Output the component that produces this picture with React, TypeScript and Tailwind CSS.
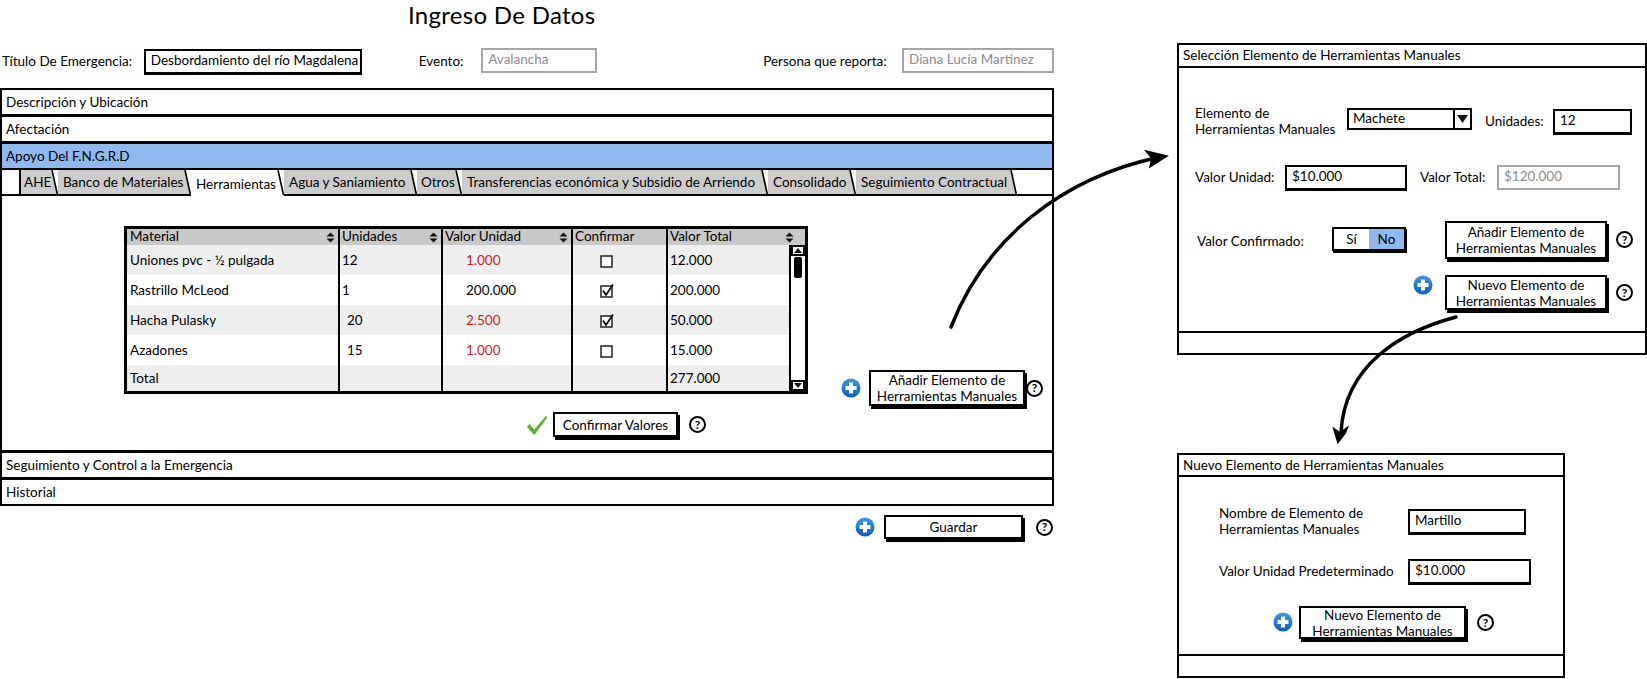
import React from "react";

function PlusIcon({ className = "" }: { className?: string }) {
  return (
    <svg width="20" height="21" viewBox="0 0 20 21" className={`shrink-0 ${className}`}>
      <defs>
        <linearGradient id="plusBlue" x1="0" y1="0" x2="0" y2="1">
          <stop offset="0" stopColor="#3f97ea" />
          <stop offset="1" stopColor="#0b5cc0" />
        </linearGradient>
      </defs>
      <circle cx="10" cy="10" r="9.5" fill="url(#plusBlue)" />
      <path d="M8 4.5h4V8h3.5v4H12v3.5H8V12H4.5V8H8z" fill="#fff" />
    </svg>
  );
}

function HelpIcon({ className = "" }: { className?: string }) {
  return (
    <span
      className={`flex h-[17px] w-[17px] shrink-0 items-center justify-center rounded-full border-2 border-black bg-white text-[12px] font-bold leading-none text-black ${className}`}
    >
      ?
    </span>
  );
}

function SortIcon() {
  return (
    <svg width="9" height="11" viewBox="0 0 9 11" className="shrink-0">
      <path d="M0.5 4.5L4.5 0.5L8.5 4.5z M0.5 6.5L4.5 10.5L8.5 6.5z" fill="#111" />
    </svg>
  );
}

function CheckBox({ checked }: { checked?: boolean }) {
  return (
    <svg width="15" height="15" viewBox="0 0 15 15">
      <rect x="1" y="3" width="11" height="11" fill="#fff" stroke="#222" strokeWidth="1.5" />
      {checked && <path d="M3 7.5L6 12L13 1.5" fill="none" stroke="#111" strokeWidth="1.8" />}
    </svg>
  );
}

function SketchButton({ className = "", children }: { className?: string; children: React.ReactNode }) {
  return (
    <button
      className={`flex shrink-0 items-center justify-center border-2 border-black bg-white text-center text-[13.5px] leading-[16px] text-black shadow-[2px_3px_0_#000] ${className}`}
    >
      {children}
    </button>
  );
}

function TextBox({ className = "", muted, children }: { className?: string; muted?: boolean; children: React.ReactNode }) {
  return (
    <div
      className={`flex h-[25px] shrink-0 items-center whitespace-nowrap bg-white pb-[2px] pl-[5px] text-[13.5px] ${
        muted ? "border-2 border-[#a5a5a8] text-[#8b8b90]" : "border-2 border-black text-black shadow-[0_1px_0_#000]"
      } ${className}`}
    >
      {children}
    </div>
  );
}

function AccordionRow({ label, active }: { label: string; active?: boolean }) {
  return (
    <div
      className={`flex h-[28px] items-center border-2 border-black pl-[4px] -mt-[1px] first:mt-0 ${
        active ? "bg-[#8fb8ef]" : "bg-white"
      }`}
    >
      {label}
    </div>
  );
}

const tabs = [
  { label: "AHE", width: "w-[37px]", inset: "pl-[3px]" },
  { label: "Banco de Materiales", width: "w-[133px]", inset: "pl-[5px]" },
  { label: "Herramientas", width: "w-[93px]", inset: "pl-[5px]", active: true },
  { label: "Agua y Saniamiento", width: "w-[133px]", inset: "pl-[5px]" },
  { label: "Otros", width: "w-[45px]", inset: "pl-[4px]" },
  { label: "Transferencias económica y Subsidio de Arriendo", width: "w-[306px]", inset: "pl-[5px]" },
  { label: "Consolidado", width: "w-[88px]", inset: "pl-[5px]" },
  { label: "Seguimiento Contractual", width: "w-[161px]", inset: "pl-[5px]" },
];

const rows = [
  { name: "Uniones pvc - ½ pulgada", units: "12", unit: "1.000", red: true, checked: false, total: "12.000" },
  { name: "Rastrillo McLeod", units: "1", unit: "200.000", red: false, checked: true, total: "200.000" },
  { name: "Hacha Pulasky", units: "20", indent: true, unit: "2.500", red: true, checked: true, total: "50.000" },
  { name: "Azadones", units: "15", indent: true, unit: "1.000", red: true, checked: false, total: "15.000" },
];

const headers = ["Material", "Unidades", "Valor Unidad", "Confirmar", "Valor Total"];
const tableCols = "grid grid-cols-[211px_103px_130px_95px_1fr]";

function MaterialsTable() {
  return (
    <div className="relative h-[168px] w-[684px] border-[3px] border-black bg-white">
      <div className={`${tableCols} h-[16px] bg-[#c8c8c8]`}>
        {headers.map((h, i) => (
          <div
            key={h}
            className={`flex items-center justify-between leading-none ${i > 0 ? "border-l-2 border-black pl-[2px]" : "pl-[3px]"} ${
              i === 4 ? "pr-[11px]" : "pr-[3px]"
            }`}
          >
            {h}
            {i !== 3 && <SortIcon />}
          </div>
        ))}
      </div>
      {rows.map((r, idx) => (
        <div key={r.name} className={`${tableCols} h-[30px] ${idx % 2 === 0 ? "bg-[#eeeeee]" : "bg-white"}`}>
          <div className="flex items-center pl-[3px]">{r.name}</div>
          <div className={`flex items-center border-l-2 border-black ${r.indent ? "pl-[7px]" : "pl-[2px]"}`}>{r.units}</div>
          <div className={`flex items-center border-l-2 border-black pl-[23px] ${r.red ? "text-[#d3201f]" : ""}`}>{r.unit}</div>
          <div className="flex items-center border-l-2 border-black pl-[27px]">
            <CheckBox checked={r.checked} />
          </div>
          <div className="flex items-center border-l-2 border-black pl-[2px]">{r.total}</div>
        </div>
      ))}
      <div className={`${tableCols} h-[26px] bg-[#eeeeee]`}>
        <div className="flex items-center pl-[3px]">Total</div>
        <div className="border-l-2 border-black" />
        <div className="border-l-2 border-black" />
        <div className="border-l-2 border-black" />
        <div className="flex items-center border-l-2 border-black pl-[2px]">277.000</div>
      </div>
      {/* scrollbar sits over the last column */}
      <div className="absolute bottom-0 right-0 top-[16px] flex w-[16px] flex-col border-l-2 border-black bg-white">
        <div className="flex h-[11px] items-center justify-center border-2 border-black">
          <svg width="8" height="5" viewBox="0 0 8 5"><path d="M0 5L4 0L8 5z" fill="#111" /></svg>
        </div>
        <div className="mx-auto mt-[1px] h-[21px] w-[8px] rounded-[2px] bg-black" />
        <div className="mt-auto flex h-[11px] items-center justify-center border-2 border-black">
          <svg width="8" height="5" viewBox="0 0 8 5"><path d="M0 0L4 5L8 0z" fill="#111" /></svg>
        </div>
      </div>
    </div>
  );
}

function Arrows() {
  return (
    <svg width="1647" height="679" viewBox="0 0 1647 679" className="pointer-events-none absolute left-0 top-0" fill="none">
      <path d="M951 327C985 240 1060 178 1160 157" stroke="#000" strokeWidth="3.5" strokeLinecap="round" />
      <path d="M1146 151L1167 156L1150 167L1152 158z" fill="#000" stroke="#000" strokeWidth="1.5" />
      <path d="M1456 317C1400 332 1345 365 1341 432" stroke="#000" strokeWidth="3.5" strokeLinecap="round" />
      <path d="M1334 429L1340 433L1347 428L1345 433L1338 442z" fill="#000" stroke="#000" strokeWidth="2" />
    </svg>
  );
}

export default function App() {
  return (
    <div className="relative h-[679px] w-[1647px] overflow-hidden bg-white font-['Lato','Liberation_Sans',sans-serif] text-[13.5px] text-black">
      <div className="w-[1054px]">
        <h1 className="-mb-[5px] h-[29px] pl-[408px] text-[24px] leading-[29px] tracking-[0.3px]">Ingreso De Datos</h1>

        <div className="mt-[24px] flex h-[26px] items-center">
          <span className="w-[145px] pl-[2px]">Título De Emergencia:</span>
          <TextBox className="w-[218px]">Desbordamiento del río Magdalena</TextBox>
          <span className="ml-[57px] w-[63px]">Evento:</span>
          <TextBox muted className="w-[116px] -mt-[2px]">Avalancha</TextBox>
          <span className="ml-[166px] w-[140px]">Persona que reporta:</span>
          <TextBox muted className="w-[152px] -mt-[2px]">Diana Lucía Martinez</TextBox>
        </div>

        <div className="mt-[14px]">
          <AccordionRow label="Descripción y Ubicación" />
          <AccordionRow label="Afectación" />
          <AccordionRow label="Apoyo Del F.N.G.R.D" active />

          <div className="flex h-[26px] border-x-2 border-black bg-white">
            <div className="w-[19px] border-b-2 border-r-2 border-black" />
            {tabs.map((t) => (
              <div
                key={t.label}
                className={`relative flex ${t.width} ${t.inset} items-center whitespace-nowrap ${
                  t.active ? "bg-white pt-[3px]" : "border-b-2 border-black bg-[#cccccc]"
                }`}
              >
                {t.label}
                <svg width="7" height="26" viewBox="0 0 7 26" className="absolute right-0 top-0">
                  <path d="M1 0H7V25z" fill="#fff" />
                  <path d="M1 0L6.5 25" stroke="#000" strokeWidth="1.6" />
                </svg>
              </div>
            ))}
            <div className="flex-1 border-b-2 border-black" />
          </div>

          <div className="relative h-[256px] border-x-2 border-b-2 border-black bg-white pl-[122px] pt-[30px]">
            <MaterialsTable />
            <div className="ml-[402px] mt-[18px] flex items-center">
              <svg width="22" height="22" viewBox="0 0 24 22" className="mr-[5px]">
                <path d="M1 13L4 10L9 16L22 1L23 3L10 21H8z" fill="#5cb532" />
              </svg>
              <SketchButton className="h-[25px] w-[125px]">Confirmar Valores</SketchButton>
              <HelpIcon className="ml-[11px]" />
            </div>
            <div className="absolute left-[839px] top-[174px] flex items-center">
              <PlusIcon className="mr-[8px]" />
              <SketchButton className="h-[36px] w-[156px]">
                Añadir Elemento de
                <br />
                Herramientas Manuales
              </SketchButton>
              <HelpIcon className="ml-[1px]" />
            </div>
          </div>

          <AccordionRow label="Seguimiento y Control a la Emergencia" />
          <AccordionRow label="Historial" />
        </div>

        <div className="mt-[9px] flex items-center justify-end pr-[1px]">
          <PlusIcon className="mr-[9px]" />
          <SketchButton className="h-[24px] w-[139px]">Guardar</SketchButton>
          <HelpIcon className="ml-[13px]" />
        </div>
      </div>

      {/* Selección window */}
      <div className="absolute left-[1177px] top-[43px] flex h-[312px] w-[470px] flex-col border-2 border-black bg-white">
        <div className="flex h-[23px] items-center border-b-2 border-black pl-[4px]">Selección Elemento de Herramientas Manuales</div>
        <div className="flex-1 pl-[16px]">
          <div className="mt-[37px] flex items-center">
            <span className="w-[152px] leading-[16px]">
              Elemento de
              <br />
              Herramientas Manuales
            </span>
            <div className="-mt-[5px] flex h-[22px] w-[125px] items-center border-2 border-black pl-[4px]">
              <span className="flex-1">Machete</span>
              <span className="flex h-full w-[17px] items-center justify-center border-l-2 border-black">
                <svg width="11" height="9" viewBox="0 0 11 9"><path d="M0 1L11 1L5.5 9z" fill="#111" /></svg>
              </span>
            </div>
            <span className="ml-[13px] w-[68px]">Unidades:</span>
            <TextBox className="w-[79px]">12</TextBox>
          </div>
          <div className="mt-[28px] flex items-center">
            <span className="w-[90px]">Valor Unidad:</span>
            <TextBox className="w-[122px]">$10.000</TextBox>
            <span className="ml-[13px] w-[77px]">Valor Total:</span>
            <TextBox muted className="w-[123px]">$120.000</TextBox>
          </div>
          <div className="mt-[31px] flex items-start">
            <span className="ml-[2px] mt-[10px] w-[135px]">Valor Confirmado:</span>
            <div className="mt-[6px] flex h-[24px] w-[74px] border-2 border-black text-center shadow-[1px_2px_0_#000]">
              <span className="flex w-[35px] items-center justify-center">Sí</span>
              <span className="flex flex-1 items-center justify-center bg-[#8fb8ef]">No</span>
            </div>
            <SketchButton className="ml-[39px] h-[38px] w-[162px]">
              Añadir Elemento de
              <br />
              Herramientas Manuales
            </SketchButton>
            <HelpIcon className="ml-[9px] mt-[10px]" />
          </div>
          <div className="mt-[16px] flex items-center">
            <PlusIcon className="ml-[218px] mt-[-14px]" />
            <SketchButton className="ml-[12px] h-[35px] w-[162px]">
              Nuevo Elemento de
              <br />
              Herramientas Manuales
            </SketchButton>
            <HelpIcon className="ml-[9px]" />
          </div>
        </div>
        <div className="h-[22px] border-t-2 border-black" />
      </div>

      {/* Nuevo Elemento window */}
      <div className="absolute left-[1177px] top-[453px] flex h-[225px] w-[388px] flex-col border-2 border-black bg-white">
        <div className="flex h-[22px] items-center border-b-2 border-black pl-[4px]">Nuevo Elemento de Herramientas Manuales</div>
        <div className="flex-1 pl-[40px]">
          <div className="mt-[28px] flex items-center">
            <span className="w-[189px] leading-[16px]">
              Nombre de Elemento de
              <br />
              Herramientas Manuales
            </span>
            <TextBox className="w-[118px]">Martillo</TextBox>
          </div>
          <div className="mt-[22px] flex items-center">
            <span className="w-[189px]">Valor Unidad Predeterminado</span>
            <TextBox className="w-[123px]">$10.000</TextBox>
          </div>
          <div className="mt-[22px] flex items-center pl-[54px]">
            <PlusIcon className="mr-[6px]" />
            <SketchButton className="h-[33px] w-[167px]">
              Nuevo Elemento de
              <br />
              Herramientas Manuales
            </SketchButton>
            <HelpIcon className="ml-[11px]" />
          </div>
        </div>
        <div className="h-[22px] border-t-2 border-black" />
      </div>

      <Arrows />
    </div>
  );
}
